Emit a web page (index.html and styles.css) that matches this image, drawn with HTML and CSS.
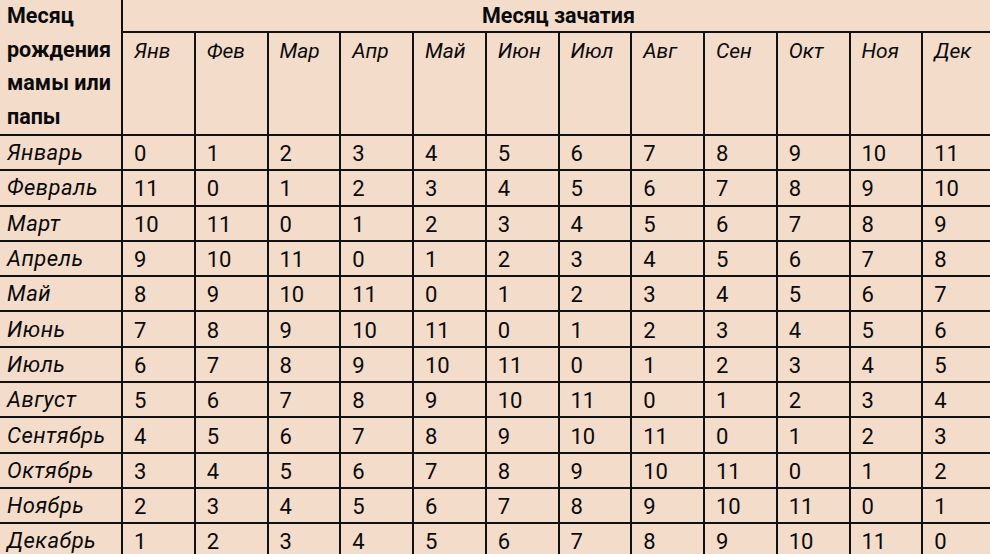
FILE: index.html
```html
<!DOCTYPE html>
<html lang="ru">
<head>
<meta charset="utf-8">
<title>Таблица</title>
<link rel="stylesheet" href="styles.css">
</head>
<body>
<div class="frame">
<table class="grid">
<colgroup>
<col class="c-label">
<col class="c-m"><col class="c-m"><col class="c-m"><col class="c-m"><col class="c-m"><col class="c-m">
<col class="c-m"><col class="c-m"><col class="c-m"><col class="c-m"><col class="c-m"><col class="c-m">
</colgroup>
<thead>
<tr class="r-top">
<th class="corner" rowspan="2">Месяц рождения мамы или папы</th>
<th class="title" colspan="12">Месяц зачатия</th>
</tr>
<tr class="r-months">
<th class="mon">Янв</th><th class="mon">Фев</th><th class="mon">Мар</th><th class="mon">Апр</th><th class="mon">Май</th><th class="mon">Июн</th><th class="mon">Июл</th><th class="mon">Авг</th><th class="mon">Сен</th><th class="mon">Окт</th><th class="mon">Ноя</th><th class="mon">Дек</th>
</tr>
</thead>
<tbody>
<tr><th class="lab">Январь</th><td>0</td><td>1</td><td>2</td><td>3</td><td>4</td><td>5</td><td>6</td><td>7</td><td>8</td><td>9</td><td>10</td><td>11</td></tr>
<tr><th class="lab">Февраль</th><td>11</td><td>0</td><td>1</td><td>2</td><td>3</td><td>4</td><td>5</td><td>6</td><td>7</td><td>8</td><td>9</td><td>10</td></tr>
<tr><th class="lab">Март</th><td>10</td><td>11</td><td>0</td><td>1</td><td>2</td><td>3</td><td>4</td><td>5</td><td>6</td><td>7</td><td>8</td><td>9</td></tr>
<tr><th class="lab">Апрель</th><td>9</td><td>10</td><td>11</td><td>0</td><td>1</td><td>2</td><td>3</td><td>4</td><td>5</td><td>6</td><td>7</td><td>8</td></tr>
<tr><th class="lab">Май</th><td>8</td><td>9</td><td>10</td><td>11</td><td>0</td><td>1</td><td>2</td><td>3</td><td>4</td><td>5</td><td>6</td><td>7</td></tr>
<tr><th class="lab">Июнь</th><td>7</td><td>8</td><td>9</td><td>10</td><td>11</td><td>0</td><td>1</td><td>2</td><td>3</td><td>4</td><td>5</td><td>6</td></tr>
<tr><th class="lab">Июль</th><td>6</td><td>7</td><td>8</td><td>9</td><td>10</td><td>11</td><td>0</td><td>1</td><td>2</td><td>3</td><td>4</td><td>5</td></tr>
<tr><th class="lab">Август</th><td>5</td><td>6</td><td>7</td><td>8</td><td>9</td><td>10</td><td>11</td><td>0</td><td>1</td><td>2</td><td>3</td><td>4</td></tr>
<tr><th class="lab">Сентябрь</th><td>4</td><td>5</td><td>6</td><td>7</td><td>8</td><td>9</td><td>10</td><td>11</td><td>0</td><td>1</td><td>2</td><td>3</td></tr>
<tr><th class="lab">Октябрь</th><td>3</td><td>4</td><td>5</td><td>6</td><td>7</td><td>8</td><td>9</td><td>10</td><td>11</td><td>0</td><td>1</td><td>2</td></tr>
<tr><th class="lab">Ноябрь</th><td>2</td><td>3</td><td>4</td><td>5</td><td>6</td><td>7</td><td>8</td><td>9</td><td>10</td><td>11</td><td>0</td><td>1</td></tr>
<tr><th class="lab">Декабрь</th><td>1</td><td>2</td><td>3</td><td>4</td><td>5</td><td>6</td><td>7</td><td>8</td><td>9</td><td>10</td><td>11</td><td>0</td></tr>
</tbody>
</table>
</div>
</body>
</html>
```

FILE: styles.css
```css
html, body {
  margin: 0;
  padding: 0;
  background: #f4dccb;
}
body {
  width: 990px;
  height: 554px;
  overflow: hidden;
  font-family: Roboto, "Noto Sans", "Liberation Sans", sans-serif;
  color: #0a0a0a;
}
.frame {
  width: 990px;
  height: 554px;
  overflow: hidden;
}
.grid {
  border-collapse: collapse;
  table-layout: fixed;
  width: 997px;
  margin: -1px 0 0 -1px;
  background: #f4dccb;
}
.c-label { width: 123px; }
.grid th, .grid td {
  border: 2px solid #111;
  padding: 0 0 0 11px;
  text-align: left;
  font-size: 22px;
  white-space: nowrap;
  overflow: hidden;
}
.grid .corner {
  border-top: none;
  border-left: none;
  vertical-align: top;
  font-weight: 700;
  font-size: 21.5px;
  line-height: 33.5px;
  white-space: normal;
  padding: 0 2px 0 8px;
}
.grid .title {
  border-top: none;
  text-align: center;
  font-weight: 700;
  font-size: 21.5px;
  padding: 0;
  vertical-align: middle;
}
.r-top { height: 33px; }
.r-months { height: 103px; }
.grid .mon {
  vertical-align: top;
  font-weight: 400;
  font-style: italic;
  font-size: 21px;
  padding-top: 5px;
  line-height: 26px;
}
.grid tbody tr { height: 35.3px; }
.grid .lab {
  border-left: none;
  font-weight: 400;
  font-style: italic;
  letter-spacing: 0.5px;
  padding-left: 8px;
  vertical-align: middle;
}
.grid td {
  vertical-align: middle;
  padding-top: 2px;
}
```
